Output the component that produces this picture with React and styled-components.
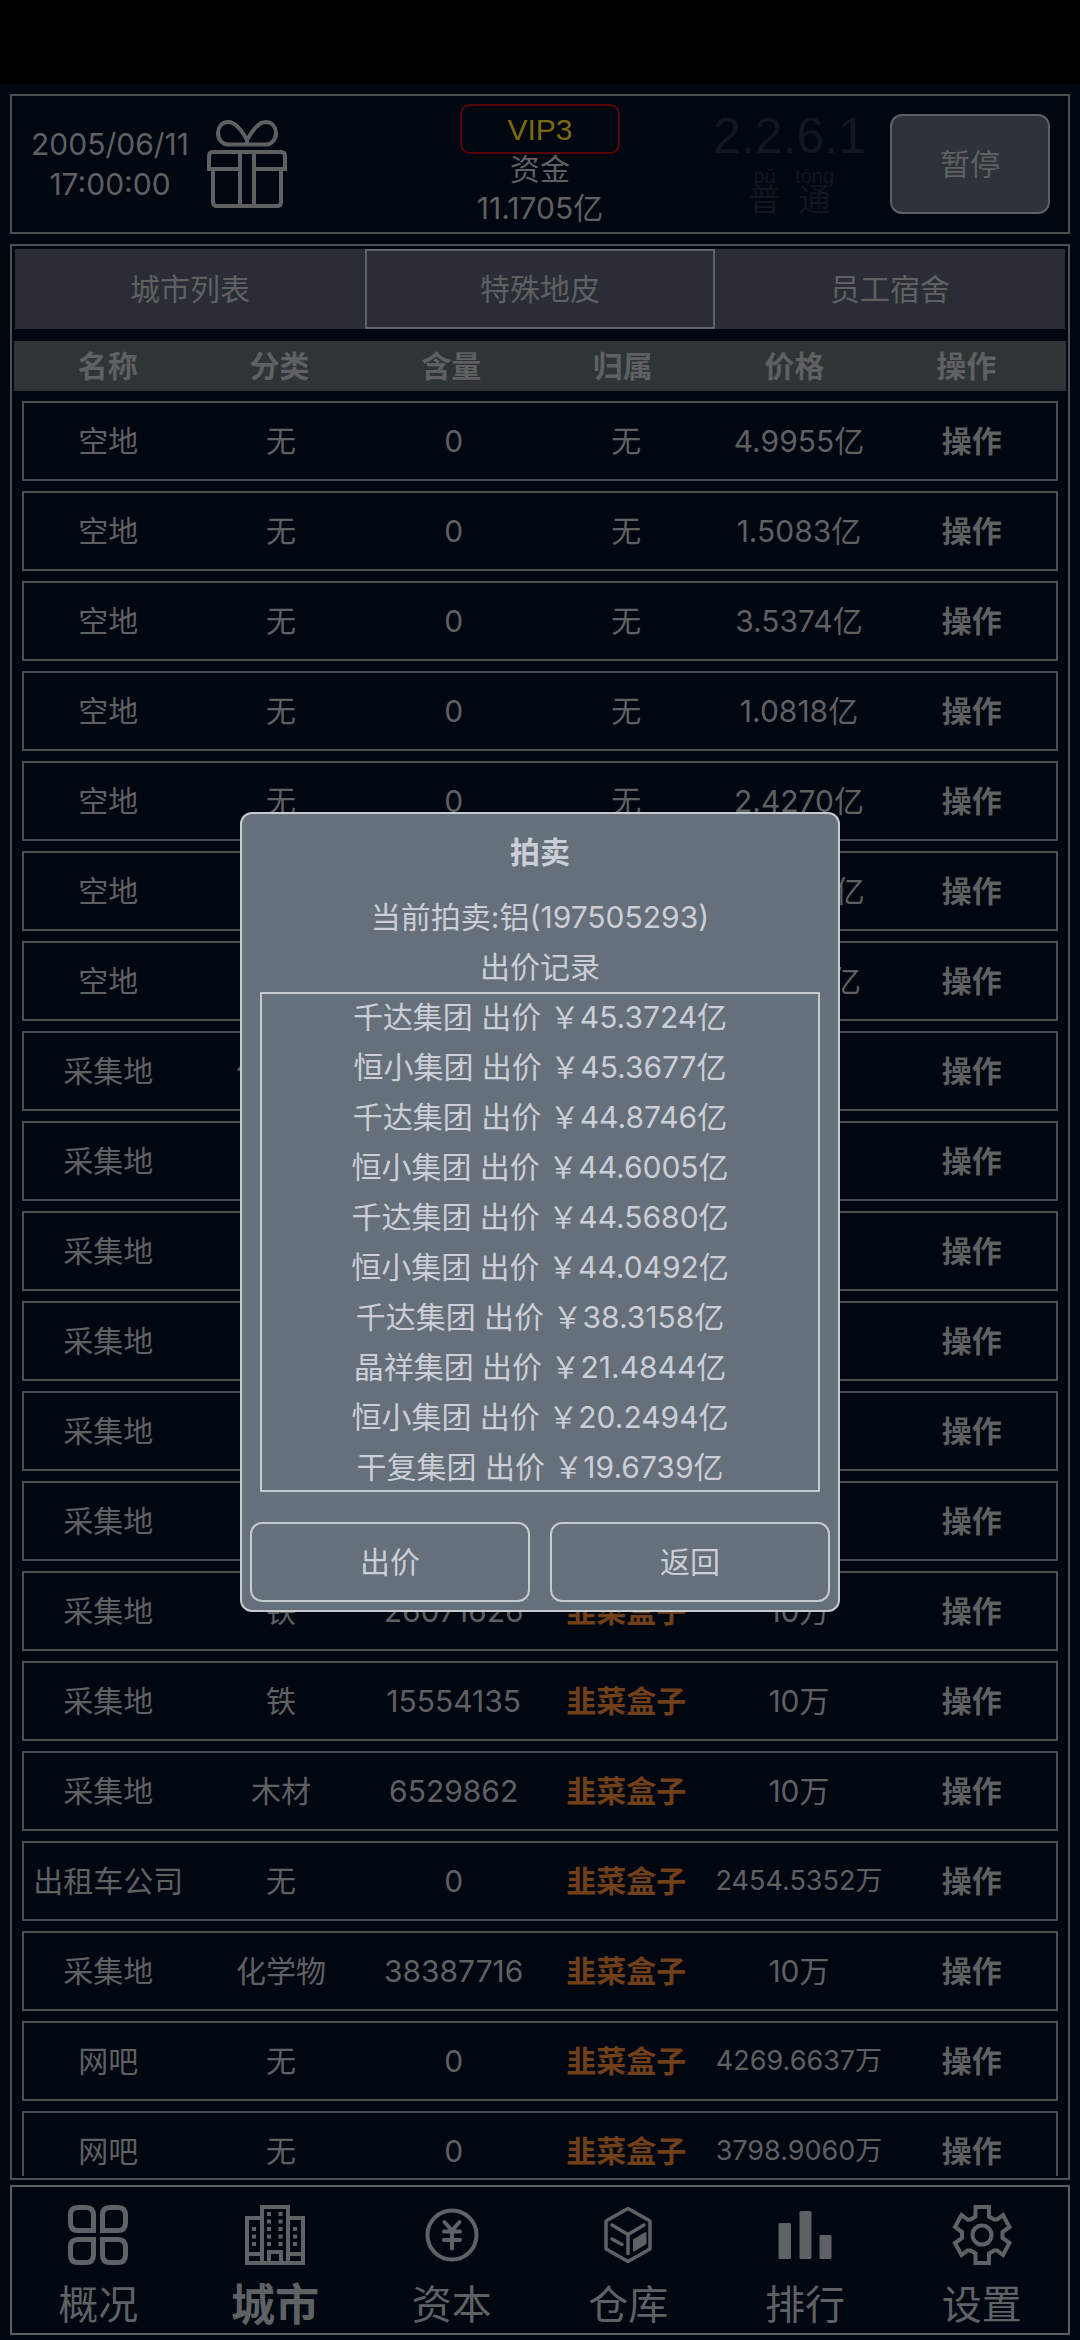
import React from 'react';
import styled, { createGlobalStyle } from 'styled-components';

const lands = [
    ['空地', '无', '0', '无', '4.9955亿'],
    ['空地', '无', '0', '无', '1.5083亿'],
    ['空地', '无', '0', '无', '3.5374亿'],
    ['空地', '无', '0', '无', '1.0818亿'],
    ['空地', '无', '0', '无', '2.4270亿'],
    ['空地', '无', '0', '无', '2.3640亿'],
    ['空地', '无', '0', '无', '1.3052亿'],
    ['采集地', '化学物', '30512846', '韭菜盒子', '10万'],
    ['采集地', '铁', '18240537', '韭菜盒子', '10万'],
    ['采集地', '铁', '20418865', '韭菜盒子', '10万'],
    ['采集地', '木材', '7350214', '韭菜盒子', '10万'],
    ['采集地', '铁', '16920473', '韭菜盒子', '10万'],
    ['采集地', '木材', '8104926', '韭菜盒子', '10万'],
    ['采集地', '铁', '26071626', '韭菜盒子', '10万'],
    ['采集地', '铁', '15554135', '韭菜盒子', '10万'],
    ['采集地', '木材', '6529862', '韭菜盒子', '10万'],
    ['出租车公司', '无', '0', '韭菜盒子', '2454.5352万'],
    ['采集地', '化学物', '38387716', '韭菜盒子', '10万'],
    ['网吧', '无', '0', '韭菜盒子', '4269.6637万'],
    ['网吧', '无', '0', '韭菜盒子', '3798.9060万'],
];

const bids = [
    ['千达集团', '45.3724亿'],
    ['恒小集团', '45.3677亿'],
    ['千达集团', '44.8746亿'],
    ['恒小集团', '44.6005亿'],
    ['千达集团', '44.5680亿'],
    ['恒小集团', '44.0492亿'],
    ['千达集团', '38.3158亿'],
    ['晶祥集团', '21.4844亿'],
    ['恒小集团', '20.2494亿'],
    ['干复集团', '19.6739亿'],
];

const tabs = ['城市列表', '特殊地皮', '员工宿舍'];
const columns = ['名称', '分类', '含量', '归属', '价格', '操作'];

const GiftIcon = () => (
    <svg width='80' height='88' viewBox='0 0 80 88' fill='none' stroke='currentColor' strokeWidth='4'>
        <path d='M40 20C35 11 29 2 21.5 2C14 2 11 8 11 13C11 19 15 24.500 21 24.500H59C65 24.500 69 19 69 13C69 8 66 2 58.500 2C51 2 45 11 40 20V24' />
        <path d='M33 49H2V36Q2 32 6 32H74Q78 32 78 36V49H47' />
        <path d='M6 49V82Q6 86 10 86H70Q74 86 74 82V49M33 32V86M47 32V86' />
    </svg>
);

const OverviewIcon = () => (
    <svg width='60' height='60' viewBox='0 0 60 60' fill='none' stroke='currentColor' strokeWidth='5'>
        <path d='M10 2.500H18Q25.500 2.500 25.500 10V25.500H10Q2.500 25.500 2.500 18V10Q2.500 2.500 10 2.500Z' />
        <path d='M42 2.500H50Q57.500 2.500 57.500 10V18Q57.500 25.500 50 25.500H34.500V10Q34.500 2.500 42 2.500Z' />
        <path d='M10 34.500H25.500V50Q25.500 57.500 18 57.500H10Q2.500 57.500 2.500 50V42Q2.500 34.500 10 34.500Z' />
        <path d='M34.500 34.500H50Q57.500 34.500 57.500 42V50Q57.500 57.500 50 57.500H42Q34.500 57.500 34.500 50Z' />
    </svg>
);

const CityIcon = () => (
    <svg width='60' height='60' viewBox='0 0 60 60' fill='none' stroke='currentColor' strokeWidth='4'>
        <path d='M17 58V2H43V58M17 13H2V58H58V13H43M2 49H17M43 49H58M24 58V47H36V58' />
        <path
            strokeDasharray='4 3.500'
            d='M24 7V42M35.500 7V42M9 22V42M50 22V42'
        />
    </svg>
);

const CapitalIcon = () => (
    <svg
        width='60'
        height='60'
        viewBox='0 0 60 60'
        fill='none'
        stroke='currentColor'
        strokeWidth='4'
        strokeLinecap='round'
    >
        <circle cx='30' cy='30' r='24.500' />
        <path d='M22.500 17L30 25.500L37.500 17M22 26.500H38M22 35H38M30 26V43.500' />
    </svg>
);

const StoreIcon = () => (
    <svg
        width='60'
        height='60'
        viewBox='0 0 60 60'
        fill='none'
        stroke='currentColor'
        strokeWidth='3.500'
        strokeLinecap='round'
        strokeLinejoin='round'
    >
        <path d='M30 3.500L52 16V44L30 56.500L8 44V16Z' />
        <path d='M14 20L30 29.500L46 20M30 30V48.500M14 34L24 39.500' />
        <path d='M36 35L47.500 28V38.500L36 45.500Z' fill='currentColor' strokeWidth='2' />
    </svg>
);

const RankIcon = () => (
    <svg width='60' height='60' viewBox='0 0 60 60' fill='currentColor'>
        <rect x='3.500' y='18' width='12.500' height='36' rx='1.500' />
        <rect x='24.500' y='6' width='12' height='48' rx='1.500' />
        <rect x='44.500' y='30' width='12' height='24' rx='1.500' />
    </svg>
);

const SettingsIcon = () => (
    <svg width='60' height='60' viewBox='0 0 60 60' fill='none' stroke='currentColor' strokeWidth='4'>
        <path d='M23.500 2H37V11.500L42 14.500H45L51 10L57.500 22L50.500 27V33L57.500 38L51 50L45 45.500H42L37 48.500V58H23.500V48.500L18.500 45.500H15.500L9.500 50L3 38L10 33V27L3 22L9.500 10L15.500 14.500H18.500L23.500 11.500Z' />
        <circle cx='30' cy='30' r='9.500' />
    </svg>
);

const navItems = [
    { label: '概况', icon: <OverviewIcon /> },
    { label: '城市', icon: <CityIcon />, active: true },
    { label: '资本', icon: <CapitalIcon /> },
    { label: '仓库', icon: <StoreIcon /> },
    { label: '排行', icon: <RankIcon /> },
    { label: '设置', icon: <SettingsIcon /> },
];

function App() {
    return (
        <Page>
            <GlobalStyle />
            <StatusBar />
            <Game>
                <TopBar>
                    <TopLeft>
                        <Clock>
                            2005/06/11
                            <br />
                            17:00:00
                        </Clock>
                        <GiftButton aria-label='礼包'>
                            <GiftIcon />
                        </GiftButton>
                    </TopLeft>
                    <Funds>
                        <Vip>VIP3</Vip>
                        <FundsLabel>资金</FundsLabel>
                        <FundsValue>11.1705亿</FundsValue>
                    </Funds>
                    <TopRight>
                        <Version>
                            <VersionNumber>2.2.6.1</VersionNumber>
                            <Mode>
                                <Ruby>
                                    普<rt>pǔ</rt>
                                </Ruby>
                                <Ruby>
                                    通<rt>tōng</rt>
                                </Ruby>
                            </Mode>
                        </Version>
                        <PauseButton>暂停</PauseButton>
                    </TopRight>
                </TopBar>

                <Panel>
                    <Tabs>
                        {tabs.map((tab) => (
                            <Tab key={tab} $active={tab === '特殊地皮'}>
                                {tab}
                            </Tab>
                        ))}
                    </Tabs>
                    <Table>
                        <thead>
                            <HeadRow>
                                {columns.map((column) => (
                                    <th key={column}>{column}</th>
                                ))}
                            </HeadRow>
                        </thead>
                        <Body>
                            {lands.map(([name, type, amount, owner, price], index) => (
                                <Row key={index}>
                                    <td>{name}</td>
                                    <td>{type}</td>
                                    <td>{amount}</td>
                                    <Owner $owned={owner !== '无'}>{owner}</Owner>
                                    <Price $long={price.length > 8}>{price}</Price>
                                    <td>
                                        <RowButton>操作</RowButton>
                                    </td>
                                </Row>
                            ))}
                        </Body>
                    </Table>
                </Panel>

                <Nav>
                    {navItems.map((item) => (
                        <NavLink key={item.label} href='#' $active={item.active}>
                            {item.icon}
                            <span>{item.label}</span>
                        </NavLink>
                    ))}
                </Nav>

                <Overlay>
                    <Dialog role='dialog' aria-labelledby='auction-title'>
                        <DialogTitle id='auction-title'>拍卖</DialogTitle>
                        <DialogLine>当前拍卖:铝(197505293)</DialogLine>
                        <DialogLine>出价记录</DialogLine>
                        <BidList>
                            {bids.map(([company, price]) => (
                                <li key={price}>
                                    {company} 出价 ￥{price}
                                </li>
                            ))}
                        </BidList>
                        <DialogFooter>
                            <DialogButton>出价</DialogButton>
                            <DialogButton>返回</DialogButton>
                        </DialogFooter>
                    </Dialog>
                </Overlay>
            </Game>
        </Page>
    );
}

export default App;

const GlobalStyle = createGlobalStyle`
    * {
        box-sizing: border-box;
    }

    body {
        margin: 0;
        background: #000710;
    }

    button {
        padding: 0;
        border: 0;
        background: none;
        color: inherit;
        font: inherit;
    }
`;

const Page = styled.div`
    display: flex;
    flex-direction: column;
    height: 100vh;
    background: #000710;
    color: #5f6062;
    font-family: Inter, 'Noto Sans CJK SC', sans-serif;
    font-size: 30px;
    line-height: 40px;
`;

const StatusBar = styled.div`
    flex: none;
    height: 84px;
    background: #000;
`;

const Game = styled.div`
    position: relative;
    display: flex;
    flex: 1;
    flex-direction: column;
    min-height: 0;
    padding: 10px 10px 5px;
`;

const TopBar = styled.header`
    display: grid;
    flex: none;
    grid-template-columns: 1fr 160px 1fr;
    height: 140px;
    padding: 0 18px;
    border: 2px solid #4a4f52;
`;

const TopLeft = styled.div`
    display: flex;
    align-items: center;
    gap: 17px;
`;

const Clock = styled.div`
    width: 160px;
    text-align: center;
    white-space: nowrap;
`;

const GiftButton = styled.button`
    display: flex;
`;

const Funds = styled.div`
    display: flex;
    flex-direction: column;
    padding-top: 8px;
    text-align: center;
`;

const Vip = styled.div`
    height: 50px;
    border: 2px solid #5a0508;
    border-radius: 10px;
    color: #7d6a10;
    font-family: 'Liberation Sans', sans-serif;
    line-height: 48px;
`;

const FundsLabel = styled.div`
    line-height: 30px;
`;

const FundsValue = styled.div`
    line-height: 48px;
`;

const TopRight = styled.div`
    display: flex;
    align-items: center;
    justify-content: flex-end;
    gap: 24px;
`;

const Version = styled.div`
    color: #11171e;
    font-family: 'Liberation Sans', 'Noto Sans CJK SC', sans-serif;
`;

const VersionNumber = styled.div`
    font-size: 50px;
    line-height: 60px;
`;

const Mode = styled.div`
    display: flex;
    justify-content: center;
    padding-bottom: 8px;
`;

const Ruby = styled.ruby`
    display: flex;
    flex-direction: column-reverse;
    align-items: center;
    width: 50px;
    font-size: 32px;
    line-height: 28px;

    rt {
        display: block;
        font-size: 20px;
        line-height: 20px;
    }
`;

const PauseButton = styled.button`
    && {
        width: 160px;
        height: 100px;
        border: 2px solid #5b6063;
        border-radius: 12px;
        background: #2e3239;
    }
`;

const Panel = styled.main`
    display: flex;
    flex: 1;
    flex-direction: column;
    min-height: 0;
    margin: 10px 0 5px;
    padding: 3px 2px 2px;
    border: 2px solid #4a4f52;
`;

const Tabs = styled.div`
    display: flex;
    flex: none;
    padding: 0 1px;
`;

const Tab = styled.button`
    && {
        flex: 1;
        height: 80px;
        border: 2px solid ${(props) => (props.$active ? '#5e6365' : '#2a2e33')};
        background: #2a2d35;
    }
`;

const Table = styled.table`
    display: flex;
    flex: 1;
    flex-direction: column;
    min-height: 0;
    margin-top: 12px;
    text-align: center;
`;

const HeadRow = styled.tr`
    display: grid;
    grid-template-columns: repeat(6, 1fr);
    padding: 0 14px 0 8px;
    background: #2f3437;
    line-height: 50px;

    th {
        padding: 0;
    }
`;

const Body = styled.tbody`
    display: flex;
    flex: 1;
    flex-direction: column;
    gap: 10px;
    min-height: 0;
    margin-top: 10px;
    padding: 0 8px;
    overflow-y: auto;
    scrollbar-width: none;
`;

const Row = styled.tr`
    display: grid;
    flex: none;
    grid-template-columns: repeat(6, 1fr);
    height: 80px;
    outline: 2px solid #4a4f52;
    outline-offset: -2px;
    line-height: 80px;

    td {
        padding: 0;
        white-space: nowrap;
    }
`;

const Owner = styled.td`
    color: ${(props) => (props.$owned ? '#713f18' : 'inherit')};
    font-weight: ${(props) => (props.$owned ? 700 : 400)};
`;

const Price = styled.td`
    font-size: ${(props) => (props.$long ? 27 : 30)}px;
`;

const RowButton = styled.button`
    && {
        font-weight: 700;
    }
`;

const Nav = styled.nav`
    display: grid;
    flex: none;
    grid-template-columns: repeat(6, 1fr);
    height: 150px;
    outline: 2px solid #5a5f61;
    outline-offset: -2px;
`;

const NavLink = styled.a`
    display: flex;
    flex-direction: column;
    align-items: center;
    gap: 10px;
    padding-top: 20px;
    color: #5f6264;
    font-size: ${(props) => (props.$active ? 44 : 40)}px;
    font-weight: ${(props) => (props.$active ? 700 : 400)};
    line-height: 60px;
    text-decoration: none;
`;

const Overlay = styled.div`
    position: absolute;
    inset: 0;
    display: flex;
    align-items: center;
    justify-content: center;
`;

const Dialog = styled.section`
    width: 600px;
    border: 2px solid #c6cbcf;
    border-radius: 12px;
    background: #65707b;
    color: #cbced6;
    text-align: center;
`;

const DialogTitle = styled.h2`
    margin: 0;
    padding-bottom: 2px;
    font-size: 30px;
    line-height: 76px;
`;

const DialogLine = styled.p`
    margin: 0;
    line-height: 50px;
`;

const BidList = styled.ul`
    margin: 0 18px;
    padding: 0;
    outline: 2px solid #c6cbcf;
    outline-offset: -2px;
    line-height: 50px;
    list-style: none;
`;

const DialogFooter = styled.div`
    display: flex;
    gap: 20px;
    padding: 30px 8px 8px;
`;

const DialogButton = styled.button`
    && {
        flex: 1;
        height: 80px;
        border: 2px solid #c6cbcf;
        border-radius: 12px;
    }
`;
